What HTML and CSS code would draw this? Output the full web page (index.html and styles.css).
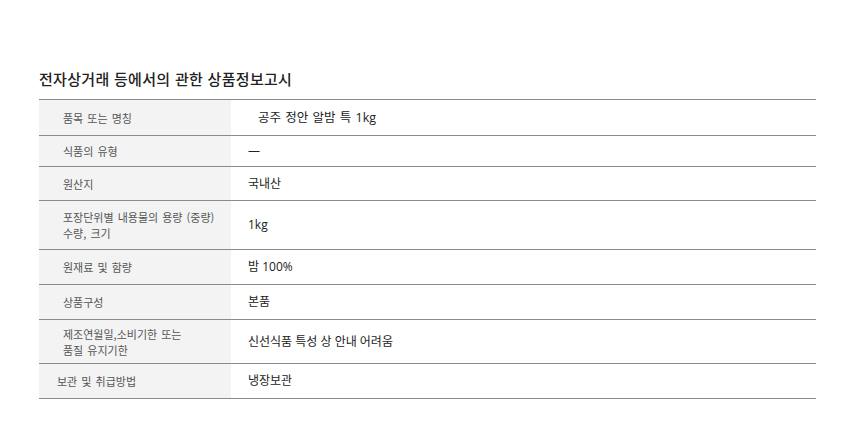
FILE: index.html
```html
<!DOCTYPE html>
<html lang="ko">
<head>
<meta charset="utf-8">
<title>상품정보고시</title>
<link rel="stylesheet" href="styles.css">
</head>
<body>
<div class="page">
  <h2 class="title">전자상거래 등에서의 관한 상품정보고시</h2>
  <div class="sheet">
    <div class="row r35"><div class="label">품목 또는 명칭</div><div class="value value--indent">공주 정안 알밤 특 1kg</div></div>
    <div class="row r30"><div class="label">식품의 유형</div><div class="value">—</div></div>
    <div class="row r33"><div class="label">원산지</div><div class="value">국내산</div></div>
    <div class="row r48"><div class="label">포장단위별 내용물의 용량 (중량)<br>수량, 크기</div><div class="value">1kg</div></div>
    <div class="row r34"><div class="label">원재료 및 함량</div><div class="value">밤 100%</div></div>
    <div class="row r34"><div class="label">상품구성</div><div class="value">본품</div></div>
    <div class="row r43"><div class="label">제조연월일,소비기한 또는<br>품질 유지기한</div><div class="value">신선식품 특성 상 안내 어려움</div></div>
    <div class="row r34"><div class="label label--short">보관 및 취급방법</div><div class="value">냉장보관</div></div>
  </div>
</div>
</body>
</html>
```
FILE: styles.css
```css
html, body {
  margin: 0;
  padding: 0;
  background: #fff;
}
body {
  font-family: "Noto Sans CJK KR", "Noto Sans", sans-serif;
  color: #222;
}
.page {
  padding: 69px 44px 0 39px;
}
.title {
  margin: 0 0 10px;
  font-size: 15px;
  line-height: 20px;
  font-weight: 500;
  color: #222;
  letter-spacing: 0.3px;
}
.sheet {
  border-top: 1px solid #8a8a8a;
}
.row {
  display: grid;
  grid-template-columns: 192px 1fr;
  border-bottom: 1px solid #8a8a8a;
}
.r30 { height: 30px; }
.r33 { height: 33px; }
.r34 { height: 34px; }
.r35 { height: 35px; }
.r43 { height: 43px; }
.r48 { height: 48px; }
.label {
  display: flex;
  align-items: center;
  background: #f3f3f3;
  padding-left: 24px;
  font-size: 11px;
  line-height: 16px;
  color: #555;
  word-spacing: 1px;
}
.label--short {
  padding-left: 18px;
}
.value {
  display: flex;
  align-items: center;
  padding-left: 17px;
  font-family: "Open Sans", "Noto Sans CJK KR", sans-serif;
  font-size: 12px;
  line-height: 16px;
  color: #222;
}
.value--indent {
  padding-left: 27px;
  font-size: 12.5px;
  word-spacing: 1px;
}
```
